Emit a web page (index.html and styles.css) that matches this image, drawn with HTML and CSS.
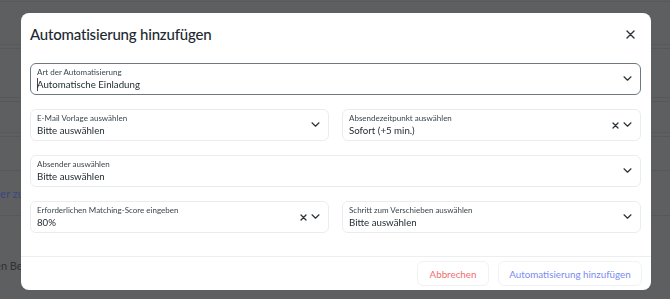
FILE: index.html
```html
<!DOCTYPE html>
<html>
    <head>
        <link rel="stylesheet" href="styles.css">
        <title>Automatisierung hinzufügen</title>
    </head>
    <body>
        <div class="page">
            <div class="line line-top"></div>
            <div class="band band-1"></div>
            <div class="band band-2"></div>
            <div class="band band-3"></div>
            <div class="line line-mid"></div>
            <div class="bg-row bg-link"><span>Bewerber zuordnen</span></div>
            <div class="bg-row bg-text"><span>Dokumenten Bewerber</span></div>
        </div>

        <div class="modal">
            <div class="modal-head">
                <h1>Automatisierung hinzufügen</h1>
                <span class="close">
                    <svg width="9" height="9" viewBox="0 0 9 9"><path d="M1 1 L8 8 M8 1 L1 8" stroke="#2b3338" stroke-width="1.4" stroke-linecap="round"/></svg>
                </span>
            </div>

            <div class="fields">
                <div class="field field-focus wide">
                    <div class="field-text">
                        <label>Art der Automatisierung</label>
                        <div class="value caret">Automatische Einladung</div>
                    </div>
                    <div class="icons">
                        <svg class="chev" width="9" height="5" viewBox="0 0 9 5"><path d="M1 0.8 L4.5 4.2 L8 0.8" fill="none" stroke="#2b3338" stroke-width="1.2" stroke-linecap="round" stroke-linejoin="round"/></svg>
                    </div>
                </div>

                <div class="field">
                    <div class="field-text">
                        <label>E-Mail Vorlage auswählen</label>
                        <div class="value">Bitte auswählen</div>
                    </div>
                    <div class="icons">
                        <svg class="chev" width="9" height="5" viewBox="0 0 9 5"><path d="M1 0.8 L4.5 4.2 L8 0.8" fill="none" stroke="#2b3338" stroke-width="1.2" stroke-linecap="round" stroke-linejoin="round"/></svg>
                    </div>
                </div>

                <div class="field">
                    <div class="field-text">
                        <label>Absendezeitpunkt auswählen</label>
                        <div class="value">Sofort (+5 min.)</div>
                    </div>
                    <div class="icons">
                        <svg class="clear" width="7" height="7" viewBox="0 0 7 7"><path d="M1 1 L6 6 M6 1 L1 6" stroke="#2b3338" stroke-width="1.3" stroke-linecap="round"/></svg>
                        <svg class="chev" width="9" height="5" viewBox="0 0 9 5"><path d="M1 0.8 L4.5 4.2 L8 0.8" fill="none" stroke="#2b3338" stroke-width="1.2" stroke-linecap="round" stroke-linejoin="round"/></svg>
                    </div>
                </div>

                <div class="field wide">
                    <div class="field-text">
                        <label>Absender auswählen</label>
                        <div class="value">Bitte auswählen</div>
                    </div>
                    <div class="icons">
                        <svg class="chev" width="9" height="5" viewBox="0 0 9 5"><path d="M1 0.8 L4.5 4.2 L8 0.8" fill="none" stroke="#2b3338" stroke-width="1.2" stroke-linecap="round" stroke-linejoin="round"/></svg>
                    </div>
                </div>

                <div class="field">
                    <div class="field-text">
                        <label>Erforderlichen Matching-Score eingeben</label>
                        <div class="value">80%</div>
                    </div>
                    <div class="icons">
                        <svg class="clear" width="7" height="7" viewBox="0 0 7 7"><path d="M1 1 L6 6 M6 1 L1 6" stroke="#2b3338" stroke-width="1.3" stroke-linecap="round"/></svg>
                        <svg class="chev" width="9" height="5" viewBox="0 0 9 5"><path d="M1 0.8 L4.5 4.2 L8 0.8" fill="none" stroke="#2b3338" stroke-width="1.2" stroke-linecap="round" stroke-linejoin="round"/></svg>
                    </div>
                </div>

                <div class="field">
                    <div class="field-text">
                        <label>Schritt zum Verschieben auswählen</label>
                        <div class="value">Bitte auswählen</div>
                    </div>
                    <div class="icons">
                        <svg class="chev" width="9" height="5" viewBox="0 0 9 5"><path d="M1 0.8 L4.5 4.2 L8 0.8" fill="none" stroke="#2b3338" stroke-width="1.2" stroke-linecap="round" stroke-linejoin="round"/></svg>
                    </div>
                </div>
            </div>

            <div class="modal-foot">
                <button type="button" class="btn btn-cancel">Abbrechen</button>
                <button type="button" class="btn btn-add">Automatisierung hinzufügen</button>
            </div>
        </div>
    </body>
</html>
```

FILE: styles.css
```css
body {
    margin: 0;
    background-color: #5e5f61;
    font-family: "Lato", "Open Sans", sans-serif;
    overflow: hidden;
}
.page {
    height: 299px;
}
.line {
    border-top: 1px solid #56585a;
}
.line-top {
    margin-top: 1px;
}
.line-mid {
    margin-top: 33px;
}
.band {
    height: 3px;
    border-top: 1px solid #56585a;
    border-bottom: 1px solid #56585a;
}
.band-1 {
    margin-top: 42px;
}
.band-2 {
    margin-top: 48px;
}
.band-3 {
    margin-top: 30px;
}
.bg-row {
    display: flex;
    align-items: center;
    height: 44px;
    font-size: 11px;
    white-space: nowrap;
}
.bg-link {
    border-bottom: 1px solid #56585a;
}
.bg-link span {
    margin-left: -37px;
    color: #3a4680;
}
.bg-text {
    margin-top: 42px;
    height: 14px;
}
.bg-text span {
    margin-left: -56px;
    color: #2e3135;
}

.modal {
    position: fixed;
    left: 21px;
    top: 13px;
    width: 630px;
    height: 277px;
    background: #ffffff;
    border-radius: 8px;
    display: flex;
    flex-direction: column;
}
.modal-head {
    display: flex;
    align-items: center;
    justify-content: space-between;
    padding: 7px 16px 0 9px;
    height: 28px;
}
h1 {
    margin: 0;
    font-size: 15px;
    font-weight: 500;
    color: #1d2a31;
    letter-spacing: -0.2px;
}
.close {
    display: flex;
}

.fields {
    display: grid;
    grid-template-columns: 1fr 1fr;
    column-gap: 13px;
    row-gap: 14px;
    padding: 15px 10px 0 9px;
}
.field {
    height: 30px;
    border: 1px solid #eaeced;
    border-radius: 6px;
    display: flex;
    align-items: center;
    justify-content: space-between;
    padding: 0 8px 0 6px;
}
.wide {
    grid-column: 1 / 3;
}
.field-focus {
    border-color: #6f787d;
}
.field-text {
    display: flex;
    flex-direction: column;
}
label {
    font-size: 8px;
    color: #3b464c;
    line-height: 11px;
}
.value {
    font-size: 9.7px;
    color: #222d33;
    line-height: 13px;
}
.caret {
    box-shadow: inset 1px 0 0 #3b464c;
}
.icons {
    display: flex;
    align-items: center;
    gap: 4px;
}
.chev {
    margin-top: -2px;
}

.modal-foot {
    margin-top: auto;
    border-top: 1px solid #eceef0;
    display: flex;
    justify-content: flex-end;
    gap: 9px;
    padding: 4px 9px 4px 0;
}
.btn {
    height: 25px;
    background: #ffffff;
    border: 1px solid #f1f2f4;
    border-radius: 6px;
    font-family: "Lato", "Open Sans", sans-serif;
    font-size: 9.8px;
    padding: 0;
    white-space: nowrap;
}
.btn-cancel {
    color: #ef6f70;
    width: 72px;
}
.btn-add {
    color: #7a8cf0;
    width: 144px;
}
```
